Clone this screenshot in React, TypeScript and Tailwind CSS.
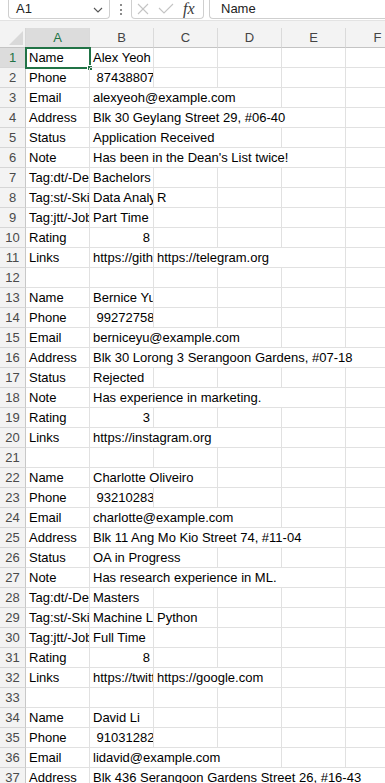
import React from "react";

type Cell = { t: string; span?: number; right?: boolean };
type Row = (Cell | null)[];

const W: Record<number, string> = {
  1: "w-16",
  2: "w-32",
  3: "w-48",
  4: "w-64",
  5: "w-80",
};

const c = (t: string, span = 1, right = false): Cell => ({ t, span, right });

const rows: Row[] = [
  [c("Name"), c("Alex Yeoh")],
  [c("Phone"), c(" 87438807")],
  [c("Email"), c("alexyeoh@example.com", 3)],
  [c("Address"), c("Blk 30 Geylang Street 29, #06-40", 4)],
  [c("Status"), c("Application Received", 3)],
  [c("Note"), c("Has been in the Dean's List twice!", 4)],
  [c("Tag:dt/-Degree"), c("Bachelors")],
  [c("Tag:st/-Skill"), c("Data Analytics"), c("R")],
  [c("Tag:jtt/-Job Type"), c("Part Time")],
  [c("Rating"), c("8", 1, true)],
  [c("Links"), c("https://github.com"), c("https://telegram.org", 3)],
  [],
  [c("Name"), c("Bernice Yu")],
  [c("Phone"), c(" 99272758")],
  [c("Email"), c("berniceyu@example.com", 3)],
  [c("Address"), c("Blk 30 Lorong 3 Serangoon Gardens, #07-18", 5)],
  [c("Status"), c("Rejected")],
  [c("Note"), c("Has experience in marketing.", 4)],
  [c("Rating"), c("3", 1, true)],
  [c("Links"), c("https://instagram.org", 3)],
  [],
  [c("Name"), c("Charlotte Oliveiro", 2)],
  [c("Phone"), c(" 93210283")],
  [c("Email"), c("charlotte@example.com", 3)],
  [c("Address"), c("Blk 11 Ang Mo Kio Street 74, #11-04", 4)],
  [c("Status"), c("OA in Progress", 2)],
  [c("Note"), c("Has research experience in ML.", 4)],
  [c("Tag:dt/-Degree"), c("Masters")],
  [c("Tag:st/-Skill"), c("Machine Learning"), c("Python")],
  [c("Tag:jtt/-Job Type"), c("Full Time")],
  [c("Rating"), c("8", 1, true)],
  [c("Links"), c("https://twitter.com"), c("https://google.com", 2)],
  [],
  [c("Name"), c("David Li")],
  [c("Phone"), c(" 91031282")],
  [c("Email"), c("lidavid@example.com", 3)],
  [c("Address"), c("Blk 436 Serangoon Gardens Street 26, #16-43", 5)],
];

const COLS = ["A", "B", "C", "D", "E", "F"];
const GREEN = "#217346";

function GridRow({ row, idx }: { row: Row; idx: number }) {
  const cells: React.ReactNode[] = [];
  let col = 0;
  while (col < 6) {
    const cell = row[col];
    if (cell) {
      const span = cell.span ?? 1;
      const isSel = idx === 0 && col === 0;
      cells.push(
        <div
          key={col}
          className={`relative h-5 shrink-0 border-r border-b border-[#e1e1e1] ${W[span]} ${
            isSel ? "" : "overflow-hidden"
          }`}
        >
          <div
            className={`overflow-hidden whitespace-pre px-[3px] text-[13px] leading-[19px] text-black ${
              cell.right ? "text-right" : "text-left"
            }`}
          >
            {cell.t}
          </div>
          {isSel && (
            <>
              <div className="pointer-events-none absolute -left-px -top-px h-[22px] w-[66px] border-2 border-[#217346]" />
              <div className="absolute left-[61px] top-[17px] h-[6px] w-[6px] border border-white bg-[#217346]" />
            </>
          )}
        </div>
      );
      col += span;
    } else {
      cells.push(
        <div key={col} className="h-5 w-16 shrink-0 border-r border-b border-[#e1e1e1]" />
      );
      col += 1;
    }
  }
  const sel = idx === 0;
  return (
    <div className="flex">
      <div
        className={`flex h-5 w-[26px] shrink-0 items-center justify-center border-r border-b border-r-[#c8c8c8] border-b-[#d6d6d6] text-[13px] ${
          sel ? "bg-[#dcdcdc] text-[#217346]" : "bg-[#f3f3f3] text-[#4a4a4a]"
        }`}
      >
        {idx + 1}
      </div>
      {cells}
    </div>
  );
}

export default function App() {
  return (
    <div className="h-[783px] w-[385px] overflow-hidden bg-white font-['Liberation_Sans',Arial,sans-serif]">
      {/* Formula bar */}
      <div className="flex h-5 items-start bg-white">
        <div className="ml-2 flex h-[19px] w-[102px] shrink-0 items-center justify-between rounded-b-[4px] border border-t-0 border-[#cfcfcf] pl-[7px] pr-[6px]">
          <span className="text-[13px] text-[#222]">A1</span>
          <svg width="10" height="6" viewBox="0 0 10 6" className="mt-[1px]">
            <polyline points="1,1 5,5 9,1" fill="none" stroke="#555" strokeWidth="1.1" />
          </svg>
        </div>
        <div className="ml-[9px] flex h-[19px] w-[4px] shrink-0 flex-col items-center justify-center gap-[2.5px]">
          <div className="h-[2px] w-[2px] bg-[#8c8c8c]" />
          <div className="h-[2px] w-[2px] bg-[#8c8c8c]" />
          <div className="h-[2px] w-[2px] bg-[#8c8c8c]" />
        </div>
        <div className="ml-[8px] flex h-[19px] w-[73px] shrink-0 items-center rounded-b-[4px] border border-t-0 border-[#cfcfcf] pl-[5px]">
          <svg width="12" height="12" viewBox="0 0 12 12" className="mb-[1px]">
            <line x1="1" y1="1" x2="11" y2="11" stroke="#c4c4c4" strokeWidth="1.1" />
            <line x1="11" y1="1" x2="1" y2="11" stroke="#c4c4c4" strokeWidth="1.1" />
          </svg>
          <svg width="16" height="11" viewBox="0 0 16 11" className="ml-[9px] mb-[1px]">
            <polyline points="1,5 6,10 15,1" fill="none" stroke="#c4c4c4" strokeWidth="1.1" />
          </svg>
          <span className="ml-[9px] font-['Liberation_Serif',serif] text-[16px] italic leading-none text-[#3a3a3a]">
            fx
          </span>
        </div>
        <div className="ml-[5px] flex h-[19px] flex-1 items-center rounded-bl-[4px] border border-t-0 border-r-0 border-[#cfcfcf] pl-[11px]">
          <span className="text-[13px] text-[#222]">Name</span>
        </div>
      </div>

      {/* separator band */}
      <div className="h-2 border-t border-[#e3e3e3] bg-[#f3f3f3]" />

      {/* Column headers */}
      <div className="flex h-5 bg-[#f3f3f3]">
        <div className="relative h-5 w-[26px] shrink-0 border-r border-b border-r-[#d6d6d6] border-b-[#c4c4c4]">
          <svg width="16" height="16" viewBox="0 0 16 16" className="absolute bottom-[1px] right-[1px]">
            <polygon points="15,1 15,15 1,15" fill="#d9d9d9" />
          </svg>
        </div>
        {COLS.map((l, i) => (
          <div
            key={l}
            className={`flex h-5 w-16 shrink-0 items-center justify-center border-r border-b border-r-[#dadada] border-b-[#c4c4c4] text-[13px] ${
              i === 0 ? "bg-[#dcdcdc] text-[#217346]" : "text-[#444]"
            }`}
          >
            {l}
          </div>
        ))}
      </div>

      {/* Grid */}
      <div>
        {rows.map((r, i) => (
          <GridRow key={i} row={r} idx={i} />
        ))}
      </div>
    </div>
  );
}
